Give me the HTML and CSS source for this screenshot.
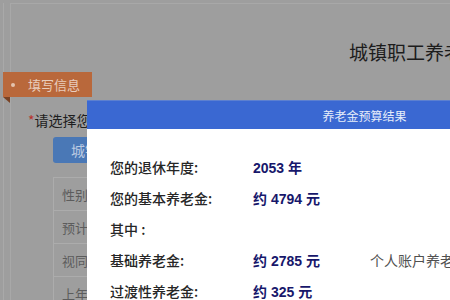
FILE: index.html
```html
<!DOCTYPE html>
<html lang="zh-CN">
<head>
  <meta charset="UTF-8">
  <meta name="viewport" content="width=device-width, initial-scale=1.0">
  <title>养老金计算器</title>
  <link rel="stylesheet" href="styles.css">
</head>
<body>
  <div class="frame">
    <div class="page">
      <h1>城镇职工养老金计算器</h1>
      <div class="tab"><span class="dot"></span>填写信息</div>
      <p class="ask"><span class="star">*</span>请选择您的参保类型</p>
      <button class="type-btn">城镇职工</button>
      <table class="info">
        <tr><td>性别</td></tr>
        <tr><td>预计退休年龄</td></tr>
        <tr><td>视同缴费年限</td></tr>
        <tr><td>上年度平均工资</td></tr>
      </table>
    </div>
  </div>

  <div class="modal">
    <div class="modal-head">养老金预算结果</div>
    <div class="modal-body">
      <div class="row">
        <span class="label">您的退休年度:</span>
        <span class="value">2053 年</span>
      </div>
      <div class="row">
        <span class="label">您的基本养老金:</span>
        <span class="value">约 4794 元</span>
      </div>
      <div class="row">
        <span class="label">其中 :</span>
      </div>
      <div class="row">
        <span class="label">基础养老金:</span>
        <span class="value">约 2785 元</span>
        <span class="extra">个人账户养老金:</span>
      </div>
      <div class="row">
        <span class="label">过渡性养老金:</span>
        <span class="value">约 325 元</span>
      </div>
    </div>
  </div>
</body>
</html>
```

FILE: styles.css
```css
body {
  margin: 0;
  background-color: #9e9e9e;
  font-family: "Noto Sans CJK SC", sans-serif;
  overflow: hidden;
}

.frame {
  margin: 3px 0 0 3px;
  padding-left: 6px;
  border-left: 1px solid #a9a9a9;
}

.page {
  height: 297px;
  border-left: 1px solid #a8a8a8;
  border-top: 1px solid #a8a8a8;
}

h1 {
  margin: 36px 0 0;
  padding-left: 338px;
  font-size: 19px;
  line-height: 24px;
  font-weight: normal;
  color: #1c1c1c;
  white-space: nowrap;
}

.tab {
  position: relative;
  display: flex;
  align-items: center;
  width: 89px;
  height: 25px;
  margin: 8px 0 0 -8px;
  background-color: #b9683b;
  color: #e9cdbd;
  font-size: 13px;
}

.tab::after {
  content: "";
  position: absolute;
  left: 0;
  bottom: -6px;
  border-top: 6px solid #7a4224;
  border-left: 7px solid transparent;
}

.dot {
  width: 4px;
  height: 4px;
  margin: 0 13px 0 8px;
  border-radius: 50%;
  background-color: #e4c3ae;
}

.ask {
  margin: 13px 0 0;
  padding-left: 17px;
  font-size: 14px;
  line-height: 20px;
  color: #1e1e1e;
}

.star {
  color: #b8332c;
}

.type-btn {
  display: block;
  width: 90px;
  height: 26px;
  margin: 7px 0 0 42px;
  padding: 0 0 0 18px;
  text-align: left;
  border: none;
  border-radius: 3px;
  background-color: #4a78b6;
  color: #bccbe2;
  font-family: inherit;
  font-size: 14px;
}

.info {
  margin: 14px 0 0 42px;
  width: 200px;
  border-collapse: collapse;
  border-left: 1px solid #acacac;
}

.info td {
  height: 32px;
  padding: 0 0 0 8px;
  border-top: 1px solid #acacac;
  font-size: 13px;
  color: #5c5c5c;
}

.modal {
  position: absolute;
  left: 87px;
  top: 100px;
  width: 555px;
  height: 260px;
  background-color: #fff;
}

.modal-head {
  height: 29px;
  line-height: 29px;
  background-color: #3a68d2;
  color: #e6edfa;
  font-size: 12px;
  text-align: center;
  border-top: 1px solid #5c80d0;
  box-sizing: border-box;
}

.modal-body {
  padding: 22px 0 0 23px;
}

.row {
  display: flex;
  height: 31px;
  align-items: center;
  white-space: nowrap;
}

.label {
  width: 143px;
  font-size: 14px;
  font-weight: 500;
  color: #262626;
}

.value {
  width: 117px;
  font-family: "Liberation Sans", "Noto Sans CJK SC", sans-serif;
  font-size: 14px;
  font-weight: bold;
  color: #17176b;
}

.extra {
  font-size: 14px;
  color: #505050;
}
```
